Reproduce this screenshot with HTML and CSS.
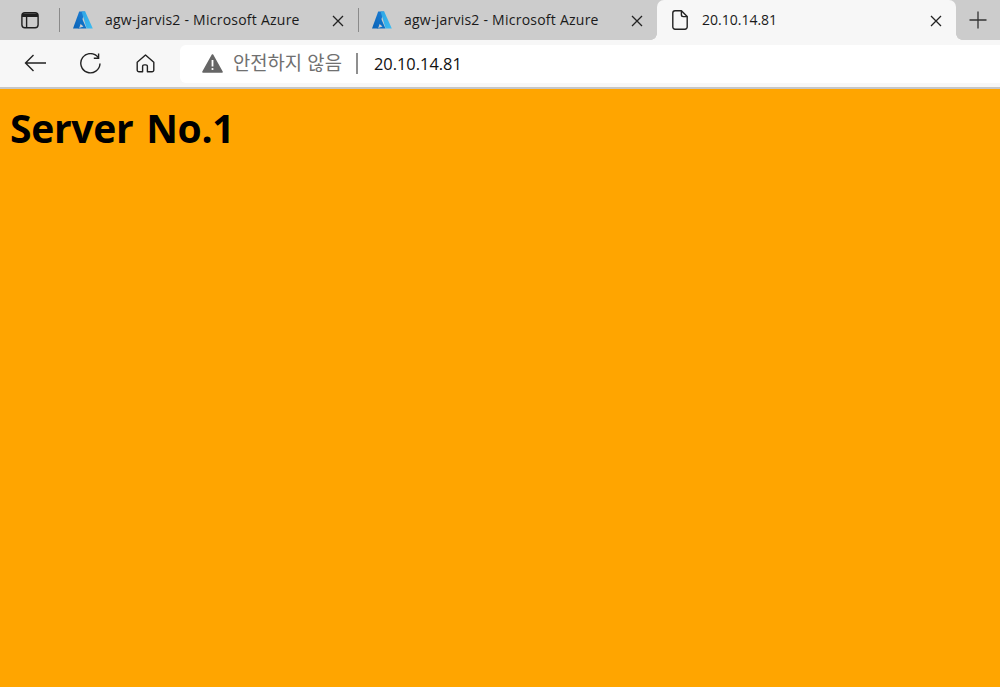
FILE: index.html
```html
<!DOCTYPE html>
<html lang="ko">
<head>
<meta charset="utf-8">
<title>20.10.14.81</title>
<link rel="stylesheet" href="styles.css">
</head>
<body>
<div class="tabstrip">
  <div class="tab-actions">
    <svg class="ico" width="20" height="20" viewBox="0 0 20 20" fill="none" stroke="#1f1f1f" stroke-width="1.4"><rect x="1.9" y="2.7" width="16.2" height="15" rx="3"/><path d="M2 3.5h16V7H2z" fill="#1f1f1f" stroke="none"/><path d="M6.6 7v10.5"/></svg>
  </div>
  <div class="tab">
    <svg class="favicon" width="20" height="18" viewBox="0 0 20 18"><defs><linearGradient id="a1" x1="0" y1="1" x2="1" y2="0"><stop offset="0" stop-color="#0a62b5"/><stop offset="1" stop-color="#1c7fd6"/></linearGradient><linearGradient id="a2" x1="0" y1="0" x2="1" y2="1"><stop offset="0" stop-color="#2ea6e6"/><stop offset="1" stop-color="#3dbbf0"/></linearGradient></defs><path d="M6.2 .5h6L6 17.5H0z" fill="url(#a1)"/><path d="M9 7.5l4.5 10H4.5l6-2-4-3.6z" fill="#0d6fc6"/><path d="M12.2 .5H8.6l5 17h6.2z" fill="url(#a2)"/></svg>
    <span class="tab-title">agw-jarvis2 - Microsoft Azure</span>
    <svg class="close" width="12" height="12" viewBox="0 0 12 12" stroke="#222" stroke-width="1.3"><path d="M1 1l10 10M11 1L1 11"/></svg>
  </div>
  <div class="tab">
    <svg class="favicon" width="20" height="18" viewBox="0 0 20 18"><path d="M6.2 .5h6L6 17.5H0z" fill="url(#a1)"/><path d="M9 7.5l4.5 10H4.5l6-2-4-3.6z" fill="#0d6fc6"/><path d="M12.2 .5H8.6l5 17h6.2z" fill="url(#a2)"/></svg>
    <span class="tab-title">agw-jarvis2 - Microsoft Azure</span>
    <svg class="close" width="12" height="12" viewBox="0 0 12 12" stroke="#222" stroke-width="1.3"><path d="M1 1l10 10M11 1L1 11"/></svg>
  </div>
  <div class="tab tab-active">
    <svg class="page-ico" width="16" height="20" viewBox="0 0 16 20" fill="none" stroke="#222" stroke-width="1.4" stroke-linejoin="round"><path d="M3 .8h6.4l5.8 5.8V17a2.2 2.2 0 0 1-2.2 2.2H3A2.2 2.2 0 0 1 .8 17V3A2.2 2.2 0 0 1 3 .8z"/><path d="M9.4 .8v4a1.8 1.8 0 0 0 1.8 1.8h4"/></svg>
    <span class="tab-title">20.10.14.81</span>
    <svg class="close" width="12" height="12" viewBox="0 0 12 12" stroke="#222" stroke-width="1.3"><path d="M1 1l10 10M11 1L1 11"/></svg>
  </div>
  <div class="new-tab">
    <svg width="18" height="18" viewBox="0 0 18 18" stroke="#333" stroke-width="1.3"><path d="M9 .5v17M.5 9h17"/></svg>
  </div>
</div>
<div class="toolbar">
  <div class="nav-btn">
    <svg width="22" height="18" viewBox="0 0 22 18" fill="none" stroke="#222" stroke-width="1.4"><path d="M22 9H1.5M9.5 1L1.5 9l8 8"/></svg>
  </div>
  <div class="nav-btn">
    <svg width="21" height="21" viewBox="0 0 21 21" fill="none" stroke="#222" stroke-width="1.4"><path d="M18.2 4.6A9.6 9.6 0 1 0 20 10.5"/><path d="M18.6 .6v4.6h-4.8"/></svg>
  </div>
  <div class="nav-btn">
    <svg width="19" height="19" viewBox="0 0 19 19" fill="none" stroke="#222" stroke-width="1.4" stroke-linejoin="round"><path d="M9.5 1L1.2 8.3V16a1.8 1.8 0 0 0 1.8 1.8h3.6v-5.3a1.6 1.6 0 0 1 1.6-1.6h1.6a1.6 1.6 0 0 1 1.6 1.6v5.3H16a1.8 1.8 0 0 0 1.8-1.8V8.3z"/></svg>
  </div>
  <div class="address">
    <svg class="warn" width="21" height="19" viewBox="0 0 21 19"><path d="M10.5 1L20 18H1z" fill="#666" stroke="#666" stroke-width="1.6" stroke-linejoin="round"/><path d="M10.5 6v6.5" stroke="#fff" stroke-width="1.8"/><circle cx="10.5" cy="15" r="1.1" fill="#fff"/></svg>
    <span class="insecure">안전하지 않음</span>
    <span class="divider"></span>
    <span class="url">20.10.14.81</span>
  </div>
</div>
<main class="page">
  <h1 class="headline">Server No.1</h1>
</main>
</body>
</html>
```
FILE: styles.css
```css
* { box-sizing: border-box; }
html, body { margin: 0; height: 100%; }
body {
  display: flex;
  flex-direction: column;
  overflow: hidden;
  font-family: "Open Sans", "Noto Sans", "Noto Sans CJK KR", sans-serif;
  background: #ffa500;
}
.tabstrip {
  display: flex;
  height: 40px;
  background: #cccccc;
  flex: none;
}
.tab-actions {
  width: 60px;
  display: flex;
  align-items: center;
  padding-left: 20px;
  position: relative;
}
.tab-actions::after, .tab:not(.tab-active) + .tab:not(.tab-active)::before {
  content: "";
  position: absolute;
  width: 1px;
  height: 24px;
  top: 8px;
  background: #8a8a8a;
}
.tab-actions::after { right: 0; }
.tab:not(.tab-active) + .tab:not(.tab-active)::before { left: -1px; }
.tab {
  position: relative;
  width: 299px;
  display: flex;
  align-items: center;
  padding: 0 15px 0 13px;
  color: #1a1a1a;
}
.tab + .tab { width: 298px; padding-right: 14px; }
.tab-title {
  flex: 1;
  margin-left: 12px;
  margin-top: -1px;
  white-space: nowrap;
  font-size: 14px;
  letter-spacing: .24px;
}
.favicon { flex: none; }
.close { flex: none; margin-top: 2px; }
.tab-active {
  width: 299px !important;
  background: #f7f7f7;
  border-radius: 7px 7px 0 0;
  padding-left: 15px;
  padding-right: 14px;
}
.tab-active::before, .tab-active::after {
  content: "";
  position: absolute;
  bottom: 0;
  width: 6px;
  height: 6px;
}
.tab-active::before {
  left: -6px;
  background: radial-gradient(circle at 0 0, transparent 5.5px, #f7f7f7 6px);
}
.tab-active::after {
  right: -6px;
  background: radial-gradient(circle at 100% 0, transparent 5.5px, #f7f7f7 6px);
}
.tab-active .tab-title { margin-left: 14px; letter-spacing: 0; }
.new-tab {
  flex: 1;
  display: flex;
  align-items: center;
  justify-content: center;
  padding-right: 1px;
}
.toolbar {
  display: flex;
  align-items: center;
  height: 49px;
  flex: none;
  background: #f7f7f7;
  border-bottom: 2px solid #c6c6c6;
  padding-top: 1px;
}
.nav-btn {
  width: 55px;
  height: 38px;
  display: flex;
  align-items: center;
  justify-content: center;
  flex: none;
  margin-top: -2px;
}
.nav-btn:first-child { margin-left: 7px; margin-right: 1px; }
.address {
  margin-left: 7px;
  flex: 1;
  height: 38px;
  background: #fff;
  border-radius: 6px 0 0 6px;
  display: flex;
  align-items: center;
  padding-left: 22px;
}
.warn { margin-top: -2px; }
.insecure {
  margin-left: 10px;
  font-family: "Noto Sans CJK KR", sans-serif;
  font-size: 18.8px;
  line-height: 24px;
  margin-top: -4px;
  color: #707070;
}
.divider {
  width: 2px;
  height: 21px;
  background: #8f8f8f;
  margin: -1px 16px 0 14px;
}
.url {
  font-size: 16.4px;
  color: #111;
  margin-top: -2px;
}
.page { flex: 1; padding: 14px 10px; }
.headline {
  margin: 0;
  font-size: 39px;
  font-weight: 700;
  line-height: 50px;
  letter-spacing: -.3px;
  color: #000;
  word-spacing: 3px;
}
```
